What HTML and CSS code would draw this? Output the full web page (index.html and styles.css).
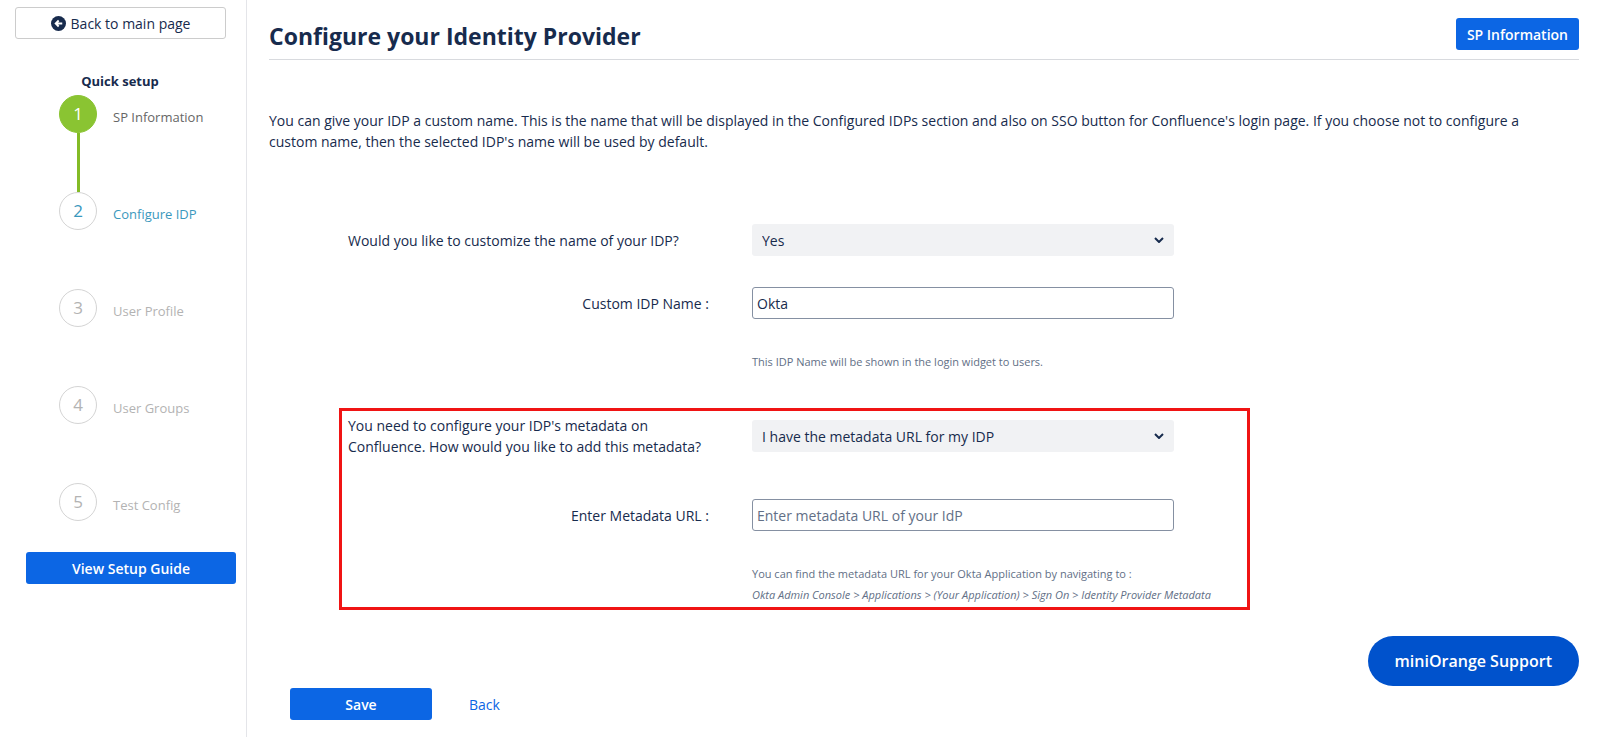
FILE: index.html
```html
<!DOCTYPE html>
<html lang="en">

<head>
  <meta charset="UTF-8" />
  <meta name="viewport" content="width=device-width, initial-scale=1.0" />
  <title>Configure your Identity Provider</title>
  <link rel="stylesheet" href="styles.css">
</head>

<body>
  <div class="page">
    <aside class="sidebar">
      <button type="button" class="btn btn-outline">
        <svg class="back-icon" viewBox="0 0 16 16" aria-hidden="true">
          <circle cx="8" cy="8" r="8" fill="#172b4d" />
          <path d="M12 8H5.5M8.2 4.8L5 8L8.2 11.2" fill="none" stroke="#fff" stroke-width="2" />
        </svg>
        Back to main page
      </button>

      <h2 class="sidebar-title">Quick setup</h2>

      <ol class="steps">
        <li class="step done"><span class="step-number">1</span><span class="step-label">SP Information</span></li>
        <li class="step current"><span class="step-number">2</span><span class="step-label">Configure IDP</span></li>
        <li class="step"><span class="step-number">3</span><span class="step-label">User Profile</span></li>
        <li class="step"><span class="step-number">4</span><span class="step-label">User Groups</span></li>
        <li class="step"><span class="step-number">5</span><span class="step-label">Test Config</span></li>
      </ol>

      <button type="button" class="btn btn-primary guide">View Setup Guide</button>
    </aside>

    <main class="content">
      <header class="header">
        <h1 class="title">Configure your Identity Provider</h1>
        <button type="button" class="btn btn-primary">SP Information</button>
      </header>

      <p class="intro">You can give your IDP a custom name. This is the name that will be displayed in the Configured IDPs section and also on SSO button for Confluence's login page. If you choose not to configure a custom name, then the selected IDP's name will be used by default.</p>

      <form class="idp-form">
        <div class="group">
          <label class="question" for="customize">Would you like to customize the name of your IDP?</label>
          <div class="select-wrap">
            <select id="customize" class="select">
              <option>Yes</option>
              <option>No</option>
            </select>
            <svg class="chevron" viewBox="0 0 10 6" aria-hidden="true"><path d="M1 1L5 5L9 1" /></svg>
          </div>

          <label class="field-label" for="idp-name">Custom IDP Name :</label>
          <input id="idp-name" class="input" type="text" value="Okta">

          <p class="hint">This IDP Name will be shown in the login widget to users.</p>
        </div>

        <div class="group metadata">
          <label class="question" for="metadata-source">You need to configure your IDP's metadata on Confluence. How would you like to add this metadata?</label>
          <div class="select-wrap">
            <select id="metadata-source" class="select">
              <option>I have the metadata URL for my IDP</option>
            </select>
            <svg class="chevron" viewBox="0 0 10 6" aria-hidden="true"><path d="M1 1L5 5L9 1" /></svg>
          </div>

          <label class="field-label" for="metadata-url">Enter Metadata URL :</label>
          <input id="metadata-url" class="input" type="text" placeholder="Enter metadata URL of your IdP">

          <p class="hint">You can find the metadata URL for your Okta Application by navigating to :<br>
            <em>Okta Admin Console &gt; Applications &gt; (Your Application) &gt; Sign On &gt; Identity Provider Metadata</em></p>
        </div>

        <div class="actions">
          <button type="button" class="btn btn-primary save">Save</button>
          <a class="back-link" href="#">Back</a>
        </div>
      </form>
    </main>
  </div>

  <button type="button" class="support">miniOrange Support</button>
</body>

</html>
```

FILE: styles.css
```css
* {
  box-sizing: border-box;
}

body {
  margin: 0;
  font-family: 'Segoe UI', 'Open Sans', sans-serif;
  font-size: 14px;
  line-height: 21px;
  color: #172b4d;
  background-color: #fff;
}

.page {
  display: flex;
  min-height: 100vh;
}

/* Sidebar */
.sidebar {
  flex: 0 0 247px;
  padding: 7px 10px 0 15px;
  border-right: 1px solid #e4e5e9;
}

.btn {
  height: 32px;
  padding: 0 11px;
  border: none;
  border-radius: 3px;
  font-family: inherit;
  font-size: 14px;
  line-height: 21px;
  cursor: pointer;
}

.btn-primary {
  background-color: #0c66e4;
  color: #fff;
  font-weight: 600;
}

.btn-outline {
  display: flex;
  align-items: center;
  justify-content: center;
  gap: 5px;
  width: 211px;
  border: 1px solid #ccc;
  background-color: #fff;
  color: #172b4d;
}

.back-icon {
  width: 15px;
  height: 15px;
}

.sidebar-title {
  margin: 32px 0 3px;
  padding-right: 11px;
  font-size: 13px;
  line-height: 21px;
  font-weight: 700;
  text-align: center;
}

.steps {
  margin: 0;
  padding: 0 0 0 44px;
  list-style: none;
}

.step {
  display: grid;
  grid-template-columns: 38px 1fr;
  grid-template-rows: 38px 59px;
  column-gap: 16px;
  justify-items: center;
  color: #b3b3b3;
}

.step:last-child {
  grid-template-rows: 38px;
}

.step-number {
  width: 38px;
  height: 38px;
  border: 1px solid #d4d4d4;
  border-radius: 50%;
  font-size: 17px;
  line-height: 36px;
  text-align: center;
}

.step-label {
  justify-self: start;
  font-size: 13px;
  line-height: 44px;
}

.step.done {
  color: #666;
}

.step.done .step-number {
  border-color: #8ac432;
  background-color: #8ac432;
  color: #fff;
}

.step.done::after {
  content: "";
  width: 3px;
  background-color: #83bb26;
}

.step.current {
  color: #3a98bd;
}

.guide {
  width: 210px;
  margin: 31px 0 0 11px;
}

/* Main area */
.content {
  flex: 1;
  min-width: 0;
  padding: 18px 21px 17px 22px;
}

.header {
  display: flex;
  align-items: flex-start;
  justify-content: space-between;
  height: 42px;
  border-bottom: 1px solid #d8dade;
}

.title {
  margin: 0;
  font-size: 23px;
  line-height: 36px;
  font-weight: 700;
}

.intro {
  margin: 50px 40px 0 0;
}

.idp-form {
  margin-top: 69px;
}

.group {
  display: grid;
  grid-template-columns: minmax(0, 361px) minmax(0, 422px);
  column-gap: 43px;
  max-width: 911px;
  margin-left: 70px;
  padding: 0 6px;
  border: 3px solid transparent;
}

.question {
  align-self: center;
}

.field-label {
  align-self: center;
  text-align: right;
}

.select-wrap {
  position: relative;
  align-self: center;
  height: 32px;
}

.select,
.input {
  width: 100%;
  height: 32px;
  border-radius: 3px;
  font-family: inherit;
  font-size: 14px;
  line-height: 21px;
  color: #172b4d;
}

.select {
  padding: 0 32px 0 10px;
  border: none;
  background-color: #f1f2f4;
  appearance: none;
}

.chevron {
  position: absolute;
  top: 13px;
  right: 10px;
  width: 10px;
  height: 6px;
  fill: none;
  stroke: #172b4d;
  stroke-width: 2;
  pointer-events: none;
}

.input {
  padding: 0 4px;
  border: 1px solid #8590a2;
  background-color: #fff;
}

.input::placeholder {
  color: #626f86;
  opacity: 1;
}

.group .field-label,
.group .input {
  margin-top: 31px;
}

.hint {
  grid-column: 2;
  margin: 32px 0 0;
  font-size: 11px;
  line-height: 21px;
  color: #626f86;
  white-space: nowrap;
}

.metadata {
  margin-top: 33px;
  padding: 4px 6px 2px;
  border-color: #f01414;
}

.metadata .field-label,
.metadata .input {
  margin-top: 42px;
}

.actions {
  display: flex;
  align-items: center;
  gap: 37px;
  margin: 78px 0 0 21px;
}

.save {
  width: 142px;
}

.back-link {
  color: #0c66e4;
  text-decoration: none;
}

.support {
  position: fixed;
  right: 21px;
  bottom: 51px;
  height: 50px;
  padding: 0 27px;
  border: none;
  border-radius: 25px;
  background-color: #0052cc;
  color: #fff;
  font-family: inherit;
  font-size: 16px;
  font-weight: 600;
  cursor: pointer;
}
```
